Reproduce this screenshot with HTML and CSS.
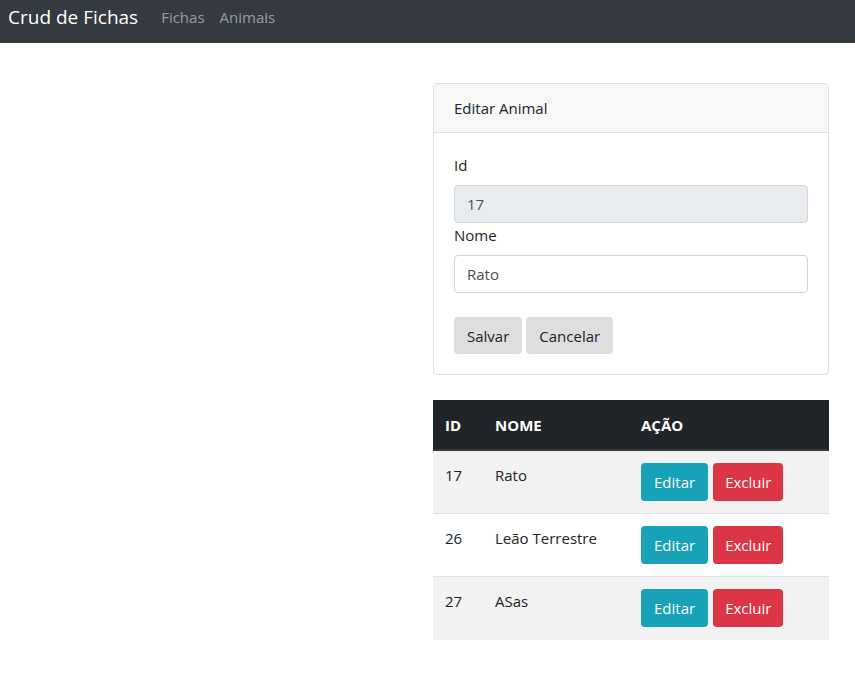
FILE: index.html
```html
<!DOCTYPE html>
<html lang="pt">
<head>
<meta charset="utf-8">
<title>Crud de Fichas</title>
<link rel="stylesheet" href="styles.css">
</head>
<body>
<nav class="navbar">
  <a class="brand" href="#">Crud de Fichas</a>
  <a class="nav-link" href="#">Fichas</a>
  <a class="nav-link" href="#">Animais</a>
</nav>
<main class="main">
  <section class="content">
    <div class="card">
      <div class="card-header">Editar Animal</div>
      <div class="card-body">
        <label class="label">Id</label>
        <div class="input input-disabled">17</div>
        <label class="label">Nome</label>
        <div class="input">Rato</div>
        <div class="actions">
          <button class="btn btn-light">Salvar</button>
          <button class="btn btn-light">Cancelar</button>
        </div>
      </div>
    </div>
    <table class="table">
      <thead>
        <tr><th class="col-id">ID</th><th class="col-nome">NOME</th><th>AÇÃO</th></tr>
      </thead>
      <tbody>
        <tr class="odd"><td>17</td><td>Rato</td><td><div class="row-actions"><button class="btn btn-info">Editar</button><button class="btn btn-danger">Excluir</button></div></td></tr>
        <tr><td>26</td><td>Leão Terrestre</td><td><div class="row-actions"><button class="btn btn-info">Editar</button><button class="btn btn-danger">Excluir</button></div></td></tr>
        <tr class="odd"><td>27</td><td>ASas</td><td><div class="row-actions"><button class="btn btn-info">Editar</button><button class="btn btn-danger">Excluir</button></div></td></tr>
      </tbody>
    </table>
  </section>
</main>
</body>
</html>
```
FILE: styles.css
```css
* { box-sizing: border-box; }
html, body { margin: 0; padding: 0; }
body {
  font-family: "Open Sans", "Noto Sans", sans-serif;
  font-size: 15px;
  line-height: 24px;
  color: #212529;
  background: #fff;
}
.navbar {
  height: 43px;
  background: #343a40;
  display: flex;
  align-items: flex-start;
  padding: 2px 8px 0 8px;
}
.brand {
  color: #fff;
  font-size: 19px;
  line-height: 30px;
  text-decoration: none;
  margin-right: 23px;
}
.nav-link {
  color: rgba(255,255,255,0.5);
  text-decoration: none;
  font-size: 15px;
  line-height: 30px;
  margin-right: 15px;
}
.main {
  display: flex;
  justify-content: flex-end;
  padding: 40px 26px 0 0;
}
.content { width: 396px; }
.card {
  border: 1px solid #dfdfdf;
  border-radius: 4px;
  overflow: hidden;
}
.card-header {
  background: #f7f7f7;
  border-bottom: 1px solid #dfdfdf;
  padding: 12px 20px;
  height: 49px;
}
.card-body { padding: 20px; }
.label { display: block; margin-bottom: 8px; }
.input {
  height: 38px;
  border: 1px solid #ced4da;
  border-radius: 4px;
  padding: 6px 12px;
  color: #495057;
}
.input-disabled { background: #e9ecef; }
.actions { margin-top: 24px; display: flex; gap: 4px; }
.btn {
  font-family: inherit;
  font-size: 15px;
  line-height: 24px;
  border: 1px solid transparent;
  border-radius: 4px;
  padding: 6px 12px;
  height: 38px;
  cursor: pointer;
}
.btn-light { background: #dedede; color: #212529; height: 37px; }
.btn-info { background: #17a2b8; color: #fff; }
.btn-danger { background: #dc3545; color: #fff; padding: 6px 11px; }
.table {
  width: 100%;
  margin-top: 25px;
  border-collapse: collapse;
}
.table th {
  background: #212529;
  color: #fff;
  font-weight: 700;
  text-align: left;
  padding: 12px;
  height: 50px;
  border-bottom: 2px solid #32383e;
}
.col-id { width: 50px; }
.col-nome { width: 146px; }
.table td {
  padding: 12px;
  vertical-align: top;
  border-top: 1px solid #dee2e6;
  height: 63px;
}
.table tr.odd td { background: #f2f2f2; }
.row-actions { display: flex; gap: 5px; }
```
